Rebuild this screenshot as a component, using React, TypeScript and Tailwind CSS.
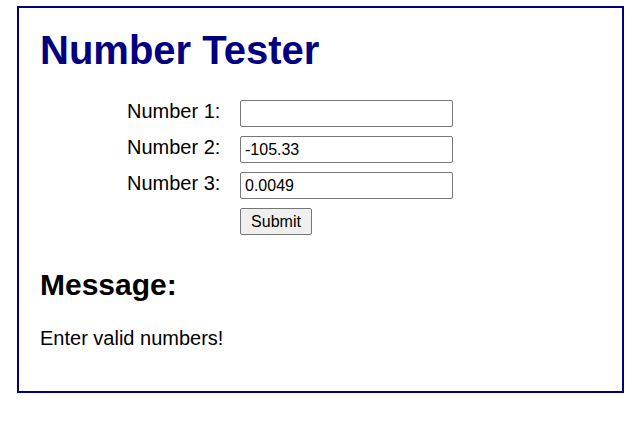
export default function App() {
  const rows = [
    { label: 'Number 1:', value: '' },
    { label: 'Number 2:', value: '-105.33' },
    { label: 'Number 3:', value: '0.0049' },
  ];

  return (
    <div className="min-h-screen bg-white pt-[6px] pl-[17px] font-['Liberation_Sans',Arial,sans-serif] text-[20px] text-black">
      <div className="w-[607px] h-[387px] border-2 border-[#000080] px-[21px] pt-[19px]">
        <h1 className="text-[40px] leading-[46px] font-bold text-[#000080]">Number Tester</h1>

        {/* Form rows */}
        <div className="mt-[27px] flex flex-col gap-[9px]">
          {rows.map((row) => (
            <div key={row.label} className="flex items-start h-[27px]">
              <label className="pl-[87px] w-[200px] leading-[23px] whitespace-nowrap">{row.label}</label>
              <input
                type="text"
                defaultValue={row.value}
                className="w-[213px] h-[27px] border border-[#767676] rounded-[2px] px-[4px] text-[16px] leading-[18px] text-black bg-white outline-none"
              />
            </div>
          ))}
          <div className="flex h-[27px]">
            <div className="w-[200px]" />
            <button className="w-[72px] h-[27px] border border-[#767676] rounded-[2px] bg-[#efefef] text-[16px] leading-[18px] text-black">
              Submit
            </button>
          </div>
        </div>

        <h2 className="mt-[33px] text-[30px] leading-[34px] font-bold">Message:</h2>
        <p className="mt-[25px] leading-[23px]">Enter valid numbers!</p>
      </div>
    </div>
  );
}
